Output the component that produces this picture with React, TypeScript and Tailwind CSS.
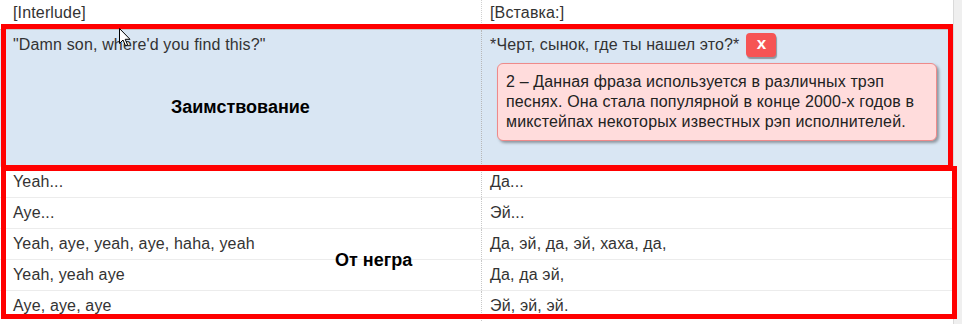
import React from 'react';

const rows = [
  ['Yeah...', 'Да...'],
  ['Aye...', 'Эй...'],
  ['Yeah, aye, yeah, aye, haha, yeah', 'Да, эй, да, эй, хаха, да,'],
  ['Yeah, yeah aye', 'Да, да эй,'],
  ['Aye, aye, aye', 'Эй, эй, эй.'],
];

function Cursor() {
  return (
    <svg
      className="absolute left-[119px] top-[28px]"
      width="12"
      height="19"
      viewBox="0 0 12 19"
    >
      <path
        d="M0.5 0.5 L0.5 15.5 L4 12 L6.5 17.8 L8.6 16.9 L6.2 11.3 L11 11.3 Z"
        fill="#fff"
        stroke="#000"
        strokeWidth="1"
        strokeLinejoin="miter"
      />
    </svg>
  );
}

export default function App() {
  return (
    <div
      className="relative flex h-[324px] w-[962px] overflow-hidden bg-white text-[16px] leading-[20px] tracking-[0.15px] text-[#333]"
      style={{ fontFamily: '"Liberation Sans", Arial, sans-serif' }}
    >
      <div className="w-[953px]">
        {/* header row */}
        <div className="grid h-[29px] grid-cols-[481px_1fr]">
          <div className="pl-[13px] pt-[3px]">[Interlude]</div>
          <div className="border-l border-dotted border-[#d0d0d0] pl-[8px] pt-[3px]">
            [Вставка:]
          </div>
        </div>

        {/* highlighted row */}
        <div className="grid h-[137px] grid-cols-[481px_1fr] border-t border-[#c4c4c4] bg-[#d9e6f3]">
          <div className="pl-[13px] pt-[5px]">"Damn son, where'd you find this?"</div>
          <div className="border-l border-dotted border-[#b8b8b8] pl-[8px] pt-[3px]">
            <div className="flex h-[24px] items-center">
              <span>*Черт, сынок, где ты нашел это?*</span>
              <span className="ml-[7px] flex h-[24px] w-[30px] items-center justify-center rounded-[4px] bg-[#f65454] pb-[2px] text-[17px] font-bold tracking-normal text-white shadow-[1px_2px_1px_rgba(0,0,0,0.35)]">
                x
              </span>
            </div>
            <div className="ml-[7px] mt-[6px] w-[440px] rounded-[6px] border border-[#ee8a8a] bg-[#ffdcdc] px-[8px] py-[8px] text-[#222] shadow-[2px_2px_3px_rgba(0,0,0,0.35)]">
              2 – Данная фраза используется в различных трэп
              <br />
              песнях. Она стала популярной в конце 2000-х годов в
              <br />
              микстейпах некоторых известных рэп исполнителей.
            </div>
          </div>
        </div>

        {/* lyric rows */}
        {rows.map(([en, ru]) => (
          <div
            key={en}
            className="grid h-[31px] grid-cols-[481px_1fr] border-t border-[#ececec]"
          >
            <div className="flex items-center pl-[13px]">{en}</div>
            <div className="flex items-center border-l border-dotted border-[#c8c8c8] pl-[8px]">
              {ru}
            </div>
          </div>
        ))}
      </div>
      <div className="w-[9px] border-l border-[#dadada] bg-[#efefef]" />

      {/* annotation overlays */}
      <div className="absolute left-[1px] top-[24px] h-[146px] w-[952px] border-[5px] border-[#ff0000]" />
      <div className="absolute left-[1px] top-[166px] h-[153px] w-[956px] border-[5px] border-[#ff0000]" />
      <div className="absolute left-[171px] top-[97px] text-[18px] font-bold leading-[21px] tracking-normal text-black">
        Заимствование
      </div>
      <div className="absolute left-[335px] top-[250px] text-[18px] font-bold leading-[21px] tracking-normal text-black">
        От негра
      </div>
      <Cursor />
    </div>
  );
}
